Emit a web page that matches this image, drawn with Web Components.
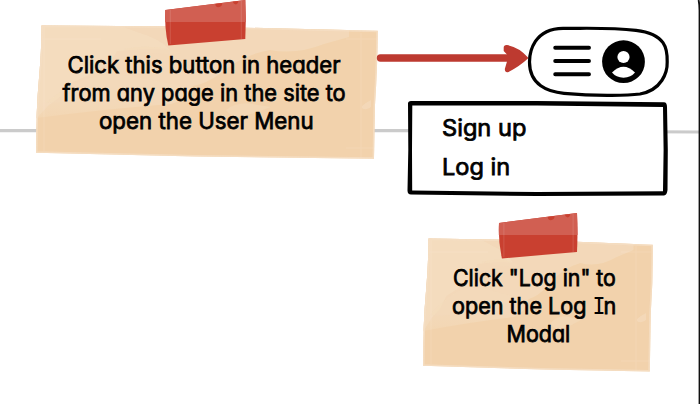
<!DOCTYPE html>
<html lang="en"><head><meta charset="utf-8"><title>User Menu</title>
<style>
body{margin:0;background:#fff;width:700px;height:404px;overflow:hidden;font-family:Inter,"Liberation Sans",sans-serif;color:#000}
</style></head><body>
<flow-canvas>
<paper-note style="left:36px;top:0;--w:342px;--pt:51px" kind="wide">
<fit-line w="271">Click this button in header</fit-line>
<fit-line w="281">from any page in the site to</fit-line>
<fit-line w="213" dx="2">open the User Menu</fit-line>
</paper-note>
<paper-note style="left:423px;top:213px;--w:230px;--pt:51px" kind="small">
<fit-line w="161">Click "Log in" to</fit-line>
<fit-line w="162">open the Log <span style="font-family:'DejaVu Sans Mono',monospace;letter-spacing:-2px;-webkit-text-stroke:0">I</span>n</fit-line>
<fit-line w="62" dx="3.5">Modal</fit-line>
</paper-note>
<red-arrow></red-arrow>
<user-button></user-button>
<user-menu><fit-line w="82">Sign up</fit-line><fit-line w="66">Log in</fit-line></user-menu>
</flow-canvas>
<script>
const define=(name,html,ready)=>customElements.define(name,class extends HTMLElement{
  connectedCallback(){
    if(!this.shadowRoot)this.attachShadow({mode:'open'}).innerHTML=html(this);
    if(ready)ready(this);
  }
});
define('flow-canvas',()=>`<style>:host{display:block;position:relative;width:700px;height:404px;overflow:hidden}
svg{position:absolute;left:0;top:0}</style>
<svg width="700" height="404"><path d="M0 130.7H400L700 132" fill="none" stroke="#cbcbcb" stroke-width="3.2"/><path d="M698.6 0Q699.6 5 699.5 12V404" fill="none" stroke="#111" stroke-width="1.8"/></svg><slot></slot>`);

define('fit-line',()=>`<style>:host{display:block;height:28px;line-height:28px;font-size:22.5px;white-space:nowrap}
span{display:inline-block;font-weight:400;font-feature-settings:"cv11";transform-origin:var(--origin,50%) 50%;-webkit-text-stroke:.75px #000;stroke-linejoin:round}</style><span><slot></slot></span>`,
el=>{const s=el.shadowRoot.querySelector('span');s.style.transform=`translateX(${el.getAttribute('dx')||0}px) scaleX(${(+el.getAttribute('w')+2)/s.offsetWidth})`;});

const tape=(x,k)=>`<g transform="translate(${x} 0) scale(${k} 1)">
<path d="M0 10L80 0Q81 20 80 39L3 45.4Q-1 28 0 10Z" fill="#c94030"/>
<path d="M0 10L80 0L80.6 22H-.2Z" fill="#d15f52"/>
<path d="M50 4L57 3Q57 7 53 7.2Q50 7 50 4M67.5 1.8L73 1Q73 4 70.5 4.4Q68 4 67.5 1.8" fill="#c94030"/>
<path d="M5 10V44M76 1V39" stroke="#fff" opacity=".12"/></g>`;

define('paper-note',el=>{
 const small=el.getAttribute('kind')==='small', w=small?230:342;
 const r=w-342;
 const shape=small
 ?'M5.5 25.4L110 27L229.8 31.7Q230.2 65 227.8 100L226.8 158.6L120 156.5L0 152.7Q0 110 3 78Q5.5 50 5.5 25.4Z'
 :'M5.5 25.5L160 26.5L341.8 30.7Q341.6 65 339 105L338 158.7L160 156.5L0 152.7Q0 110 3 78Q5.5 50 5.5 25.5Z';
 const k=w/342, id=small?'s':'w';
 return `<style>:host{display:flex;flex-direction:column;align-items:center;box-sizing:border-box;position:absolute;width:var(--w);height:162px;padding-top:var(--pt)}
 svg{position:absolute;left:0;top:0;overflow:visible}.copy{position:relative;display:grid;justify-items:center;transform:translateX(${small?-3.5:-3}px)}</style>
 <svg width="${w}" height="162"><defs><clipPath id="${id}"><path d="${shape}"/></clipPath>
 <linearGradient id="f${id}" x1="0" y1="20" x2="0" y2="119" gradientUnits="userSpaceOnUse"><stop offset=".8" stop-color="#f3d9b9"/><stop offset="1" stop-color="#f3d6b3"/></linearGradient></defs>
 <path d="${shape}" fill="#f2d2ac"/>
 <g clip-path="url(#${id})"><g transform="scale(${k} 1)">
 <path d="M0 20H313V37L288 44Q260 55 234 50Q206 55 185 73Q170 84 157 86Q154 98 135 104Q70 109 0 118Z" fill="url(#f${id})"/>
 <path d="M0 20H68L104 33Q125 39 134 50Q110 48 81 51Q77 61 58 73L35 83L25 96L12 106L0 119Z" fill="#f4ddc1" opacity=".7"/>
 <path d="M47 80Q70 72 94 76L147 86Q105 101 10 103Q20 93 47 80Z" fill="#f4dcbe" opacity=".35"/>
 <path d="M88 49Q118 43 145 53Q125 56 88 49ZM190 110Q202 100 222 105L235 107Q222 112 205 117Q193 116 190 110Z" fill="#f4dabb" opacity=".6"/></g>
 <path d="M${326+r} 106Q${331+r} 102 ${335+r} 100V107Q${329+r} 111 ${326+r} 108Z" fill="#f4dabb" opacity=".8"/>
 <path d="M8 27V151M4 39H65M${325+r} 33V158M${310+r} 39H${340+r}M${310+r} 148H${339+r}" stroke="#fff" opacity=".1"/>
 <path d="${shape}" fill="none" stroke="#f5dfc4" stroke-width="3" opacity=".8"/></g>
 ${tape(small?76:129.3,small?.975:1)}</svg>
 <div class="copy"><slot></slot></div>`;
});
define('red-arrow',()=>`<style>:host{position:absolute;left:370px;top:40px;width:162px;height:38px}svg{display:block}</style>
<svg width="162" height="38"><path d="M10.5 18H138" stroke="#bd3a30" stroke-width="7.4" stroke-linecap="round"/><path d="M137 5Q149 7 158.5 18Q150 26 138.5 32Q135 33 134.8 29L137 21.5V14.5L133.7 11V7.5Q133.7 4.8 137 5Z" fill="#bd3a30"/></svg>`);
define('user-button',()=>`<style>:host{position:absolute;left:520px;top:20px;width:156px;height:82px}svg{display:block}</style>
<svg width="156" height="82"><path d="M43 8.3C14 8.5 9.5 32 9.5 42C9.5 65 28 72 44 73.3C73 75.8 105 76 120 74C142 70 147.5 52 147.2 42C147.5 29 146 14 116 10.3C90 7.3 65 8.5 43 8.3Z" fill="#fff" stroke="#000" stroke-width="3.2"/>
<path d="M35.2 27.7H69M35.2 41H69M35.2 54.3H69" stroke="#000" stroke-width="3.9" stroke-linecap="round"/>
<circle cx="103.5" cy="41.7" r="21.4"/><circle cx="103.5" cy="37" r="6.1" fill="#fff"/><path d="M92 52.5Q103.5 41.2 115 52.5Q111 57.5 103.5 57.7Q96 57.5 92 52.5Z" fill="#fff"/></svg>`);
define('user-menu',()=>`<style>:host{position:absolute;left:407px;top:100px;width:262px;height:97px;box-sizing:border-box;padding:14px 0 0 35px;display:flex;flex-direction:column;align-items:flex-start;gap:11px;--origin:0%}
svg{position:absolute;left:0;top:0;z-index:-1}:host{isolation:isolate}</style>
<svg width="262" height="97"><path d="M2.6 4L130 3.3L258.5 4.2L258.8 92L130 93.2L2.6 92.2Z" fill="#fff"/>
<path fill-rule="evenodd" d="M1 3.5Q1 1.2 4 1L130 1L257 2.2Q260 2.3 260 7L260.8 50L260.5 90Q260 95 257 95.5L130 96L4 94.6Q.3 94.3.5 90L1.3 50ZM5.3 5.5L5 50L5.2 90.5L130 92L256 91.3L256.6 50L256 7L130 5.5Z"/></svg><slot></slot>`);
</script></body></html>
